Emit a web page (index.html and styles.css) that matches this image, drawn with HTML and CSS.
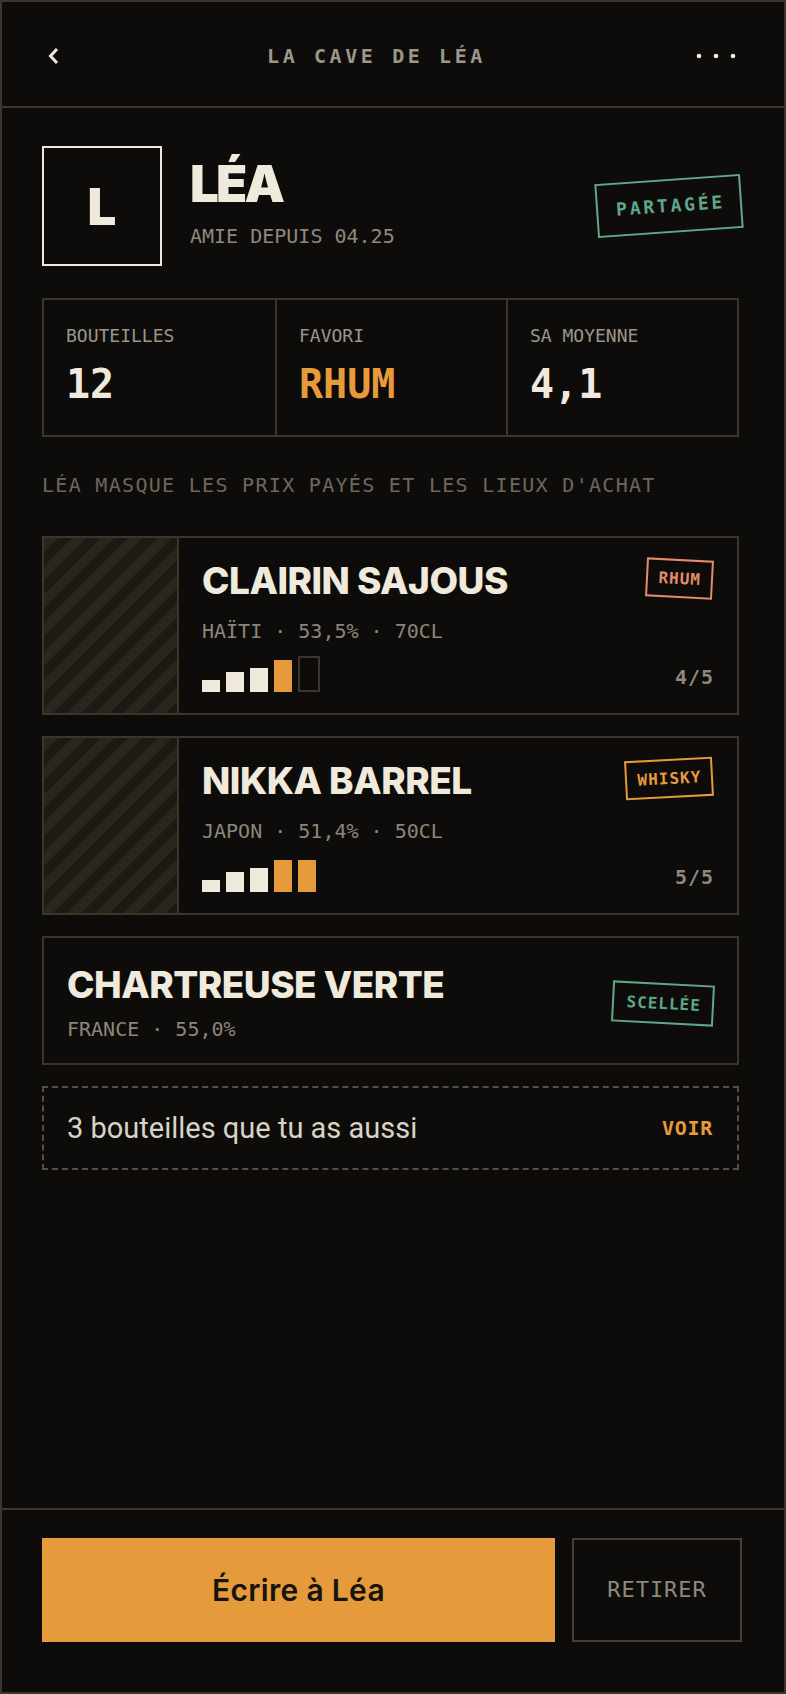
FILE: index.html
```html
<!DOCTYPE html>
<html lang="fr">
<head>
<meta charset="utf-8">
<title>La cave de Léa</title>
<link rel="stylesheet" href="styles.css">
</head>
<body>
<div class="phone">
  <header class="topbar">
    <button class="icon-btn back" aria-label="Retour">
      <svg width="12" height="18" viewBox="0 0 12 18"><polyline points="10,2 3.5,9 10,16" fill="none" stroke="#f0eadc" stroke-width="3"/></svg>
    </button>
    <h1 class="title">LA CAVE DE LÉA</h1>
    <button class="icon-btn menu" aria-label="Plus">
      <svg width="40" height="6" viewBox="0 0 40 6"><circle cx="3" cy="3" r="2.3" fill="#f0eadc"/><circle cx="20" cy="3" r="2.3" fill="#f0eadc"/><circle cx="37" cy="3" r="2.3" fill="#f0eadc"/></svg>
    </button>
  </header>

  <main class="content">
    <section class="profile">
      <div class="avatar">L</div>
      <div class="identity">
        <h2 class="name">LÉA</h2>
        <p class="since">AMIE DEPUIS 04.25</p>
      </div>
      <span class="stamp">PARTAGÉE</span>
    </section>

    <section class="stats">
      <div class="stat">
        <span class="stat-label">BOUTEILLES</span>
        <span class="stat-value">12</span>
      </div>
      <div class="stat">
        <span class="stat-label">FAVORI</span>
        <span class="stat-value accent">RHUM</span>
      </div>
      <div class="stat">
        <span class="stat-label">SA MOYENNE</span>
        <span class="stat-value">4,1</span>
      </div>
    </section>

    <p class="notice">LÉA MASQUE LES PRIX PAYÉS ET LES LIEUX D'ACHAT</p>

    <ul class="bottles">
      <li class="bottle">
        <div class="bottle-img"></div>
        <div class="bottle-body">
          <h3 class="bottle-name">CLAIRIN SAJOUS</h3>
          <span class="tag tag-rhum">RHUM</span>
          <p class="bottle-meta">HAÏTI · 53,5% · 70CL</p>
          <div class="rating">
            <div class="bars">
              <span class="bar b1"></span>
              <span class="bar b2"></span>
              <span class="bar b3"></span>
              <span class="bar b4 on"></span>
              <span class="bar off"></span>
            </div>
            <span class="score">4/5</span>
          </div>
        </div>
      </li>
      <li class="bottle">
        <div class="bottle-img"></div>
        <div class="bottle-body">
          <h3 class="bottle-name">NIKKA BARREL</h3>
          <span class="tag tag-whisky">WHISKY</span>
          <p class="bottle-meta">JAPON · 51,4% · 50CL</p>
          <div class="rating">
            <div class="bars">
              <span class="bar b1"></span>
              <span class="bar b2"></span>
              <span class="bar b3"></span>
              <span class="bar b4 on"></span>
              <span class="bar b4 on"></span>
            </div>
            <span class="score">5/5</span>
          </div>
        </div>
      </li>
      <li class="bottle plain">
        <div class="bottle-body">
          <h3 class="bottle-name">CHARTREUSE VERTE</h3>
          <span class="tag tag-sealed">SCELLÉE</span>
          <p class="bottle-meta">FRANCE · 55,0%</p>
        </div>
      </li>
    </ul>

    <a class="common" href="#">
      <span class="common-text">3 bouteilles que tu as aussi</span>
      <span class="common-link">VOIR</span>
    </a>
  </main>

  <footer class="actions">
    <button class="btn-primary">Écrire à Léa</button>
    <button class="btn-ghost">RETIRER</button>
  </footer>
</div>
</body>
</html>
```

FILE: styles.css
```css
* {
  box-sizing: border-box;
  margin: 0;
  padding: 0;
}

body {
  background: #0e0c0a;
  font-family: "DejaVu Sans Mono", "Liberation Mono", monospace;
}

.phone {
  width: 786px;
  height: 1694px;
  border: 2px solid #3a3629;
  background: #0e0c0a;
  display: flex;
  flex-direction: column;
}

/* Header */
.topbar {
  height: 106px;
  border-bottom: 2px solid #3a3629;
  display: flex;
  align-items: center;
  padding: 3px 48px 0 45px;
}

.icon-btn {
  background: none;
  border: 0;
  display: flex;
  align-items: center;
  cursor: pointer;
}

.back {
  width: 40px;
}

.menu {
  width: 70px;
  justify-content: flex-end;
}

.title {
  flex: 1;
  text-align: center;
  font: 700 20px/24px "DejaVu Sans Mono", monospace;
  letter-spacing: 3.6px;
  color: #9d978b;
}

/* Content */
.content {
  flex: 1;
  padding: 38px 45px 0 40px;
}

.profile {
  display: flex;
  align-items: flex-start;
}

.avatar {
  width: 120px;
  height: 120px;
  border: 2px solid #f0eadc;
  display: flex;
  align-items: center;
  justify-content: center;
  font: 900 51px/1 Inter, sans-serif;
  color: #f0eadc;
}

.identity {
  margin-left: 28px;
  padding-top: 12px;
}

.name {
  font: 900 51px/51px Inter, sans-serif;
  letter-spacing: -2.8px;
  color: #f0eadc;
}

.since {
  margin-top: 15px;
  font: 400 20px/24px "DejaVu Sans Mono", monospace;
  color: #8f897d;
}

.stamp {
  margin-left: auto;
  margin-right: -3px;
  align-self: center;
  transform: rotate(-4deg);
  border: 2px solid #5fa78b;
  color: #5fa78b;
  font: 700 18px/20px "DejaVu Sans Mono", monospace;
  letter-spacing: 2.8px;
  padding: 15px 15px 15px 18px;
}

/* Stats */
.stats {
  margin-top: 32px;
  display: grid;
  grid-template-columns: repeat(3, 1fr);
  border: 2px solid #3a3629;
}

.stat {
  padding: 25px 22px 29px;
  display: flex;
  flex-direction: column;
}

.stat + .stat {
  border-left: 2px solid #3a3629;
}

.stat-label {
  font: 400 18px/22px "DejaVu Sans Mono", monospace;
  color: #9c968a;
}

.stat-value {
  margin-top: 15px;
  font: 700 40px/44px "DejaVu Sans Mono", monospace;
  color: #f0eadc;
}

.stat-value.accent {
  color: #e59b3c;
}

.notice {
  margin-top: 36px;
  font: 400 20px/24px "DejaVu Sans Mono", monospace;
  letter-spacing: 1.3px;
  color: #6e685c;
}

/* Bottles */
.bottles {
  list-style: none;
  margin-top: 39px;
  display: flex;
  flex-direction: column;
  gap: 21px;
}

.bottle {
  display: flex;
  border: 2px solid #3a3629;
}

.bottle-img {
  width: 135px;
  border-right: 2px solid #3a3629;
  background: repeating-linear-gradient(135deg, #2a251d 0 10px, #1d1a16 10px 20px);
}

.bottle-body {
  flex: 1;
  padding: 24px 24px 21px 23px;
  display: grid;
  grid-template-columns: 1fr auto;
}

.bottle-name {
  grid-column: 1;
  grid-row: 1;
  font: 800 37px/37px Inter, sans-serif;
  letter-spacing: -0.5px;
  color: #f0eadc;
}

.bottle-meta {
  grid-column: 1;
  grid-row: 2;
  margin-top: 20px;
  font: 400 20px/24px "DejaVu Sans Mono", monospace;
  color: #8c867a;
}

.tag {
  grid-column: 2;
  grid-row: 1 / span 2;
  align-self: start;
  justify-self: end;
  margin-top: -3px;
  border: 2px solid;
  font: 700 16px/19px "DejaVu Sans Mono", monospace;
  letter-spacing: 1px;
  padding: 8px 9.5px 8px 10.5px;
}

.tag-rhum {
  color: #e38b6b;
  border-color: #e38b6b;
  transform: rotate(3deg);
}

.tag-whisky {
  color: #e59b3c;
  border-color: #e59b3c;
  transform: rotate(-3deg);
}

.tag-sealed {
  color: #5fa78b;
  border-color: #5fa78b;
  transform: rotate(3deg);
  padding: 9px 11.5px 9px 12.5px;
}

.rating {
  grid-column: 1 / -1;
  grid-row: 3;
  margin-top: 13px;
  display: flex;
  align-items: flex-end;
  justify-content: space-between;
}

.bars {
  display: flex;
  align-items: flex-end;
  gap: 6px;
  height: 36px;
}

.bar {
  width: 18px;
  background: #f0eadc;
}

.b1 { height: 12px; }
.b2 { height: 20px; }
.b3 { height: 24px; }
.b4 { height: 32px; }

.bar.on {
  background: #e59b3c;
}

.bar.off {
  width: 22px;
  height: 36px;
  background: transparent;
  border: 2px solid #3a3629;
}

.score {
  margin-bottom: 3px;
  margin-right: -1px;
  font: 700 20px/24px "DejaVu Sans Mono", monospace;
  letter-spacing: 1px;
  color: #8f897d;
}

.bottle.plain .bottle-body {
  padding: 28px 23px 22px 23px;
}

.bottle.plain .bottle-meta {
  margin-top: 14px;
}

.bottle.plain .tag {
  align-self: center;
  margin-top: 0;
}

/* Common bottles link */
.common {
  margin-top: 21px;
  height: 84px;
  border: 2px dashed #55503f;
  display: flex;
  align-items: center;
  justify-content: space-between;
  padding: 0 24px 0 23px;
  text-decoration: none;
}

.common-text {
  font: 400 29px/34px Roboto, sans-serif;
  color: #d9d3c5;
}

.common-link {
  font: 700 20px/24px "DejaVu Sans Mono", monospace;
  letter-spacing: 0.7px;
  color: #e59b3c;
}

/* Footer */
.actions {
  border-top: 2px solid #3a3629;
  padding: 28px 42px 50px 40px;
  display: flex;
  gap: 17px;
}

.btn-primary {
  flex: 1;
  height: 104px;
  background: #e59b3c;
  border: 0;
  font: 600 30px/1 Inter, sans-serif;
  letter-spacing: 0.3px;
  color: #17130e;
  cursor: pointer;
}

.btn-ghost {
  width: 170px;
  height: 104px;
  background: transparent;
  border: 2px solid #454136;
  font: 400 22px/1 "DejaVu Sans Mono", monospace;
  letter-spacing: 1px;
  color: #8f897d;
  cursor: pointer;
}
```
